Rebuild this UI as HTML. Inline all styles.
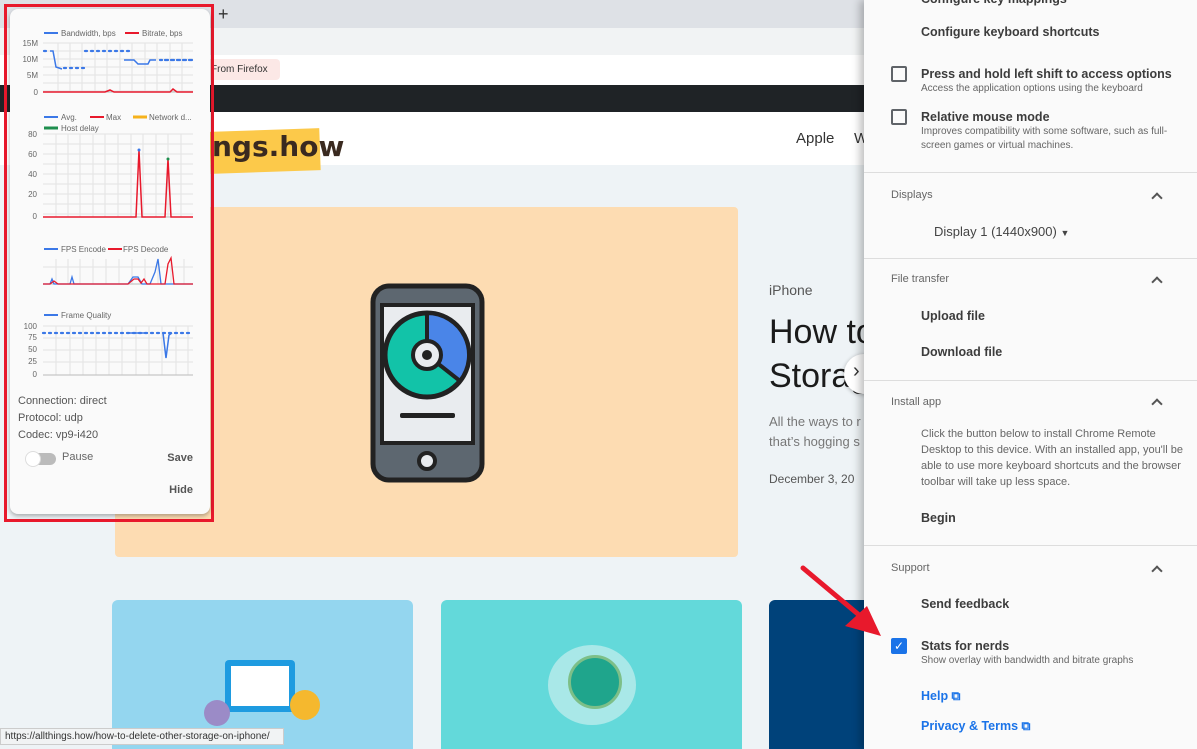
<!DOCTYPE html>
<html><head><meta charset="utf-8"><style>
*{margin:0;padding:0;box-sizing:border-box}
body{width:1197px;height:749px;overflow:hidden;position:relative;font-family:"Liberation Sans",sans-serif;background:#eef3f6}
.a{position:absolute}
.rp{position:absolute;left:864px;top:0;width:333px;height:749px;background:#fafafa;box-shadow:-4px 0 8px rgba(0,0,0,.25);color:#333}
.rp .t{position:absolute;left:57px;font-size:12.5px;font-weight:bold;color:#3c3c3c}
.rp .s{position:absolute;left:57px;font-size:10px;color:#666;line-height:14px}
.rp .h{position:absolute;left:27px;font-size:11px;color:#666}
.rp .d{position:absolute;left:0;width:333px;height:1px;background:#ddd}
.rp .cb{position:absolute;left:27px;width:16px;height:16px;border:2px solid #5f6368;border-radius:2px}
.rp .ch{position:absolute;left:289px;width:8px;height:8px;border-left:2px solid #555;border-top:2px solid #555;transform:rotate(45deg)}
.sc{font-size:8px;fill:#666;font-family:"Liberation Sans",sans-serif}
</style></head><body>
<div class="a" style="left:0;top:0;width:864px;height:28px;background:#dee1e6"></div>
<div class="a" style="left:218px;top:4px;font-size:18px;color:#333">+</div>
<div class="a" style="left:0;top:28px;width:864px;height:27px;background:#f1f3f4"></div>
<div class="a" style="left:0;top:55px;width:864px;height:30px;background:#fff"></div>
<div class="a" style="left:205px;top:59px;width:75px;height:21px;background:#fce8e6;border-radius:4px;font-size:10px;color:#333;padding:5px 0 0 6px">From Firefox</div>
<div class="a" style="left:0;top:85px;width:864px;height:27px;background:#1f2326"></div>
<div class="a" style="left:0;top:112px;width:864px;height:53px;background:#fff"></div>
<div class="a" style="left:210px;top:130px;width:110px;height:42px;background:#fcc94a;transform:rotate(-2deg)"></div>
<div class="a" style="left:212px;top:130px;font-size:28px;font-weight:bold;color:#3a2a20;font-family:'DejaVu Sans',sans-serif">ngs.how</div>
<div class="a" style="left:796px;top:130px;font-size:15px;color:#333">Apple</div>
<div class="a" style="left:854px;top:130px;font-size:15px;color:#333">W</div>
<div class="a" style="left:115px;top:207px;width:623px;height:350px;background:#fddcb2;border-radius:4px"></div>
<svg class="a" style="left:370px;top:283px" width="115" height="200" viewBox="0 0 115 200">
<rect x="3" y="3" width="109" height="194" rx="16" fill="#5d6770" stroke="#222" stroke-width="5"/>
<rect x="12" y="22" width="91" height="138" fill="#e9ecef" stroke="#222" stroke-width="4"/>
<circle cx="57" cy="72" r="42" fill="#12c3a8" stroke="#222" stroke-width="5"/>
<path d="M57 72 L57 30 A42 42 0 0 1 90 98 Z" fill="#4a85e8" stroke="#222" stroke-width="4"/>
<circle cx="57" cy="72" r="14" fill="#e9ecef" stroke="#222" stroke-width="4"/>
<circle cx="57" cy="72" r="5" fill="#222"/>
<rect x="30" y="130" width="55" height="5" rx="2" fill="#222"/>
<circle cx="57" cy="178" r="8" fill="#e9ecef" stroke="#222" stroke-width="4"/>
</svg>
<div class="a" style="left:769px;top:282px;font-size:14px;color:#555">iPhone</div>
<div class="a" style="left:769px;top:310px;font-size:34px;color:#1b1b1b;line-height:44px">How to<br>Storag</div>
<div class="a" style="left:769px;top:412px;font-size:13px;color:#777;line-height:20px">All the ways to r<br>that’s hogging s</div>
<div class="a" style="left:769px;top:472px;font-size:12px;color:#555">December 3, 20</div>
<div class="a" style="left:844px;top:354px;width:40px;height:40px;border-radius:50%;background:#fff;box-shadow:0 1px 4px rgba(0,0,0,.3);font-size:20px;color:#333;padding:6px 0 0 9px">›</div>
<div class="a" style="left:112px;top:600px;width:301px;height:149px;background:#94d6ef;border-radius:6px 6px 0 0"></div>
<div class="a" style="left:225px;top:660px;width:70px;height:52px;background:#1e9be0;border-radius:4px"></div>
<div class="a" style="left:231px;top:666px;width:58px;height:40px;background:#fff"></div>
<div class="a" style="left:290px;top:690px;width:30px;height:30px;border-radius:50%;background:#f5b82e"></div>
<div class="a" style="left:204px;top:700px;width:26px;height:26px;border-radius:50%;background:#9b8bc7"></div>
<div class="a" style="left:441px;top:600px;width:301px;height:149px;background:#63d9da;border-radius:6px 6px 0 0"></div>
<div class="a" style="left:548px;top:645px;width:88px;height:80px;border-radius:50%;background:#a9e8e8"></div>
<div class="a" style="left:568px;top:655px;width:54px;height:54px;border-radius:50%;background:#1fa58c;border:3px solid #7dbf88"></div>
<div class="a" style="left:769px;top:600px;width:100px;height:149px;background:#00427a;border-radius:6px 0 0 0"></div>
<div class="a" style="left:0;top:728px;width:284px;height:17px;background:#f1f3f4;border:1px solid #ccc;font-size:10px;color:#333;padding:2px 4px">https://allthings.how/how-to-delete-other-storage-on-iphone/</div>
<div class="rp">
<div class="t" style="top:-8px">Configure key mappings</div>
<div class="t" style="top:25px">Configure keyboard shortcuts</div>
<div class="cb" style="top:66px"></div>
<div class="t" style="top:67px">Press and hold left shift to access options</div>
<div class="s" style="top:82px">Access the application options using the keyboard</div>
<div class="cb" style="top:109px"></div>
<div class="t" style="top:110px">Relative mouse mode</div>
<div class="s" style="top:125px">Improves compatibility with some software, such as full-<br>screen games or virtual machines.</div>
<div class="d" style="top:172px"></div>
<div class="h" style="top:189px">Displays</div><div class="ch" style="top:194px"></div>
<div class="a" style="left:70px;top:224px;font-size:13px;color:#444">Display 1 (1440x900) <span style="font-size:9px">▼</span></div>
<div class="d" style="top:258px"></div>
<div class="h" style="top:273px">File transfer</div><div class="ch" style="top:278px"></div>
<div class="t" style="top:309px">Upload file</div>
<div class="t" style="top:345px">Download file</div>
<div class="d" style="top:380px"></div>
<div class="h" style="top:396px">Install app</div><div class="ch" style="top:400px"></div>
<div class="s" style="top:426px;font-size:11px;line-height:16px;width:268px">Click the button below to install Chrome Remote Desktop to this device. With an installed app, you'll be able to use more keyboard shortcuts and the browser toolbar will take up less space.</div>
<div class="t" style="top:511px">Begin</div>
<div class="d" style="top:545px"></div>
<div class="h" style="top:562px">Support</div><div class="ch" style="top:567px"></div>
<div class="t" style="top:597px">Send feedback</div>
<div class="a" style="left:27px;top:638px;width:16px;height:16px;background:#1a73e8;border-radius:2px;color:#fff;font-size:12px;text-align:center;line-height:16px">✓</div>
<div class="t" style="top:639px">Stats for nerds</div>
<div class="s" style="top:654px">Show overlay with bandwidth and bitrate graphs</div>
<div class="t" style="top:689px;color:#1a73e8">Help ⧉</div>
<div class="t" style="top:719px;color:#1a73e8">Privacy &amp; Terms ⧉</div>
</div>
<svg class="a" style="left:795px;top:560px" width="95" height="85"><line x1="8" y1="8" x2="70" y2="60" stroke="#e8192c" stroke-width="5" stroke-linecap="round"/><polygon points="86,76 50,66 72,46" fill="#e8192c"/></svg>
<div class="a" style="left:4px;top:4px;width:210px;height:518px;border:3px solid #e8192c"></div>
<div class="a" style="left:10px;top:9px;width:200px;height:505px;background:#fafafa;border-radius:8px;box-shadow:0 2px 4px rgba(0,0,0,.3)"></div>
<svg class="a" style="left:10px;top:9px" width="200" height="505">
<g stroke="#e3e3e3" stroke-width="1">
<path d="M33 34H183M33 42H183M33 50H183M33 58H183M33 66H183M33 74H183M33 82H183"/>
<path d="M48 34V83M60 34V83M72 34V83M85 34V83M97 34V83M110 34V83M122 34V83M135 34V83M147 34V83M160 34V83M172 34V83"/>
<path d="M33 125H183M33 135H183M33 145H183M33 155H183M33 165H183M33 175H183M33 185H183M33 195H183M33 205H183"/>
<path d="M46 125V208M58 125V208M70 125V208M83 125V208M95 125V208M108 125V208M121 125V208M133 125V208M146 125V208M158 125V208M171 125V208"/>
<path d="M33 258H183M46 250V275M58 250V275M70 250V275M83 250V275M96 250V275M109 250V275M122 250V275M135 250V275M148 250V275M161 250V275M174 250V275"/>
<path d="M33 317H183M33 329H183M33 341H183M33 353H183M46 317V366M60 317V366M73 317V366M86 317V366M99 317V366M112 317V366M126 317V366M139 317V366M152 317V366M166 317V366M178 317V366"/>
</g>
<g stroke="#bbb"><path d="M33 83H183M33 208H183M33 275H183M33 366H183"/></g>
<path d="M34 24H48" stroke="#3b78e7" stroke-width="2"/><text class="sc" x="51" y="27">Bandwidth, bps</text>
<path d="M115 24H129" stroke="#e8192c" stroke-width="2"/><text class="sc" x="132" y="27">Bitrate, bps</text>
<text class="sc" x="28" y="37" text-anchor="end">15M</text><text class="sc" x="28" y="53" text-anchor="end">10M</text><text class="sc" x="28" y="69" text-anchor="end">5M</text><text class="sc" x="28" y="86" text-anchor="end">0</text>
<path d="M34 42H36M54 59H64M66 59H74M75 42H120M150 51H182M155 51H182" stroke="#3b78e7" stroke-width="2.2" fill="none" stroke-dasharray="2 4" stroke-linecap="round"/>
<path d="M40 42L43 42L46 58L52 60M114 51L124 51L128 55L138 55L140 51H146" stroke="#3b78e7" stroke-width="1.5" fill="none"/>
<path d="M33 83H95L100 81L104 83H160L163 80L167 83H183" stroke="#e8192c" stroke-width="1.5" fill="none"/>
<path d="M34 108H48" stroke="#3b78e7" stroke-width="2"/><text class="sc" x="51" y="111">Avg.</text>
<path d="M80 108H94" stroke="#e8192c" stroke-width="2"/><text class="sc" x="96" y="111">Max</text>
<path d="M123 108H137" stroke="#f6b21b" stroke-width="3"/><text class="sc" x="139" y="111">Network d...</text>
<path d="M34 119H48" stroke="#1e8e4e" stroke-width="3"/><text class="sc" x="51" y="122">Host delay</text>
<text class="sc" x="27" y="128" text-anchor="end">80</text><text class="sc" x="27" y="148" text-anchor="end">60</text><text class="sc" x="27" y="168" text-anchor="end">40</text><text class="sc" x="27" y="188" text-anchor="end">20</text><text class="sc" x="27" y="210" text-anchor="end">0</text>
<path d="M33 208H126L129 141L132 208H155L158 150L161 208H183" stroke="#e8192c" stroke-width="1.5" fill="none"/>
<circle cx="129" cy="141" r="1.5" fill="#3b78e7"/><circle cx="158" cy="150" r="1.5" fill="#1e8e4e"/>
<path d="M34 240H48" stroke="#3b78e7" stroke-width="2"/><text class="sc" x="51" y="243">FPS Encode</text>
<path d="M98 240H112" stroke="#e8192c" stroke-width="2"/><text class="sc" x="113" y="243">FPS Decode</text>
<path d="M33 275L40 275L42 270L44 275L60 275L62 268L64 275L118 275L123 268L128 268L132 275L140 275L145 263L148 250L151 275L183 275" stroke="#3b78e7" stroke-width="1.3" fill="none"/>
<path d="M33 275L40 275L44 272L48 275L118 275L124 270L128 270L131 274L134 270L137 275L155 275L158 255L161 249L164 275L183 275" stroke="#e8192c" stroke-width="1.3" fill="none"/>
<path d="M34 306H48" stroke="#3b78e7" stroke-width="2"/><text class="sc" x="51" y="309">Frame Quality</text>
<text class="sc" x="27" y="320" text-anchor="end">100</text><text class="sc" x="27" y="331" text-anchor="end">75</text><text class="sc" x="27" y="343" text-anchor="end">50</text><text class="sc" x="27" y="355" text-anchor="end">25</text><text class="sc" x="27" y="368" text-anchor="end">0</text>
<path d="M33 324H183" stroke="#3b78e7" stroke-width="2.2" stroke-dasharray="2 4" stroke-linecap="round"/>
<path d="M118 324H138M153 324L156 349L159 326L162 324" stroke="#3b78e7" stroke-width="1.5" fill="none"/>
<text x="8" y="395" style="font-size:11px;fill:#555">Connection: direct</text>
<text x="8" y="412" style="font-size:11px;fill:#555">Protocol: udp</text>
<text x="8" y="429" style="font-size:11px;fill:#555">Codec: vp9-i420</text>
<rect x="16" y="444" width="30" height="12" rx="6" fill="#bbb"/><circle cx="23" cy="450" r="7.5" fill="#fff" stroke="#ddd"/>
<text x="52" y="451" style="font-size:11px;fill:#666">Pause</text>
<text x="183" y="452" text-anchor="end" style="font-size:11px;font-weight:bold;fill:#555">Save</text>
<text x="183" y="484" text-anchor="end" style="font-size:11px;font-weight:bold;fill:#555">Hide</text>
</svg>
</body></html>
